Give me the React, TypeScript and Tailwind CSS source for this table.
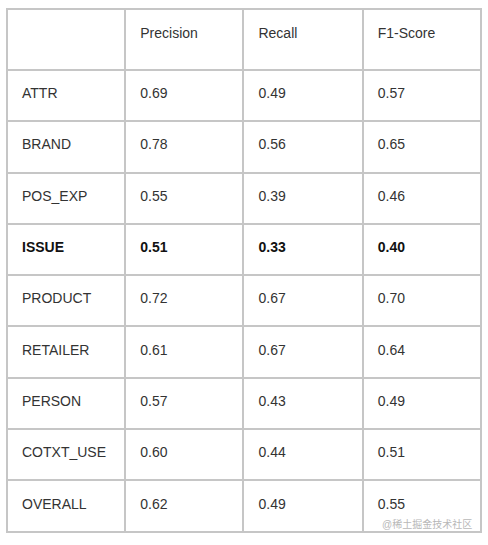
import React from "react";

const rows: { name: string; p: string; r: string; f: string; bold?: boolean }[] = [
  { name: "ATTR", p: "0.69", r: "0.49", f: "0.57" },
  { name: "BRAND", p: "0.78", r: "0.56", f: "0.65" },
  { name: "POS_EXP", p: "0.55", r: "0.39", f: "0.46" },
  { name: "ISSUE", p: "0.51", r: "0.33", f: "0.40", bold: true },
  { name: "PRODUCT", p: "0.72", r: "0.67", f: "0.70" },
  { name: "RETAILER", p: "0.61", r: "0.67", f: "0.64" },
  { name: "PERSON", p: "0.57", r: "0.43", f: "0.49" },
  { name: "COTXT_USE", p: "0.60", r: "0.44", f: "0.51" },
  { name: "OVERALL", p: "0.62", r: "0.49", f: "0.55" },
];

export default function App() {
  return (
    <div
      className="relative w-[488px] h-[545px] bg-white pl-[6px] pt-[8px] text-[14px] text-[#333333]"
      style={{ fontFamily: '"Liberation Sans", Arial, sans-serif' }}
    >
      <table className="border-collapse table-fixed w-[476px]">
        <colgroup>
          <col className="w-[118px]" />
          <col className="w-[118px]" />
          <col className="w-[119px]" />
          <col className="w-[118px]" />
        </colgroup>
        <thead>
          <tr className="h-[61px]">
            <th className="border-2 border-[#c6c6c6] align-top pt-[13px] pl-[14px] text-left font-normal"></th>
            <th className="border-2 border-[#c6c6c6] align-top pt-[13px] pl-[14px] text-left font-normal">Precision</th>
            <th className="border-2 border-[#c6c6c6] align-top pt-[13px] pl-[14px] text-left font-normal">Recall</th>
            <th className="border-2 border-[#c6c6c6] align-top pt-[13px] pl-[14px] text-left font-normal">F1-Score</th>
          </tr>
        </thead>
        <tbody>
          {rows.map((r) => (
            <tr key={r.name} className="h-[51.3px]">
              {[r.name, r.p, r.r, r.f].map((v, i) => (
                <td
                  key={i}
                  className={`border-2 border-[#c6c6c6] align-middle pl-[14px] pb-[4px] ${r.bold ? "font-bold text-[#111111]" : ""}`}
                >
                  {v}
                </td>
              ))}
            </tr>
          ))}
        </tbody>
      </table>
      <div
        className="absolute left-[382px] top-[519px] text-[10px] leading-[12px] text-[#b8b8b8]"
        style={{ fontFamily: '"Liberation Sans", "Noto Sans CJK SC", sans-serif' }}
      >
        @稀土掘金技术社区
      </div>
    </div>
  );
}
